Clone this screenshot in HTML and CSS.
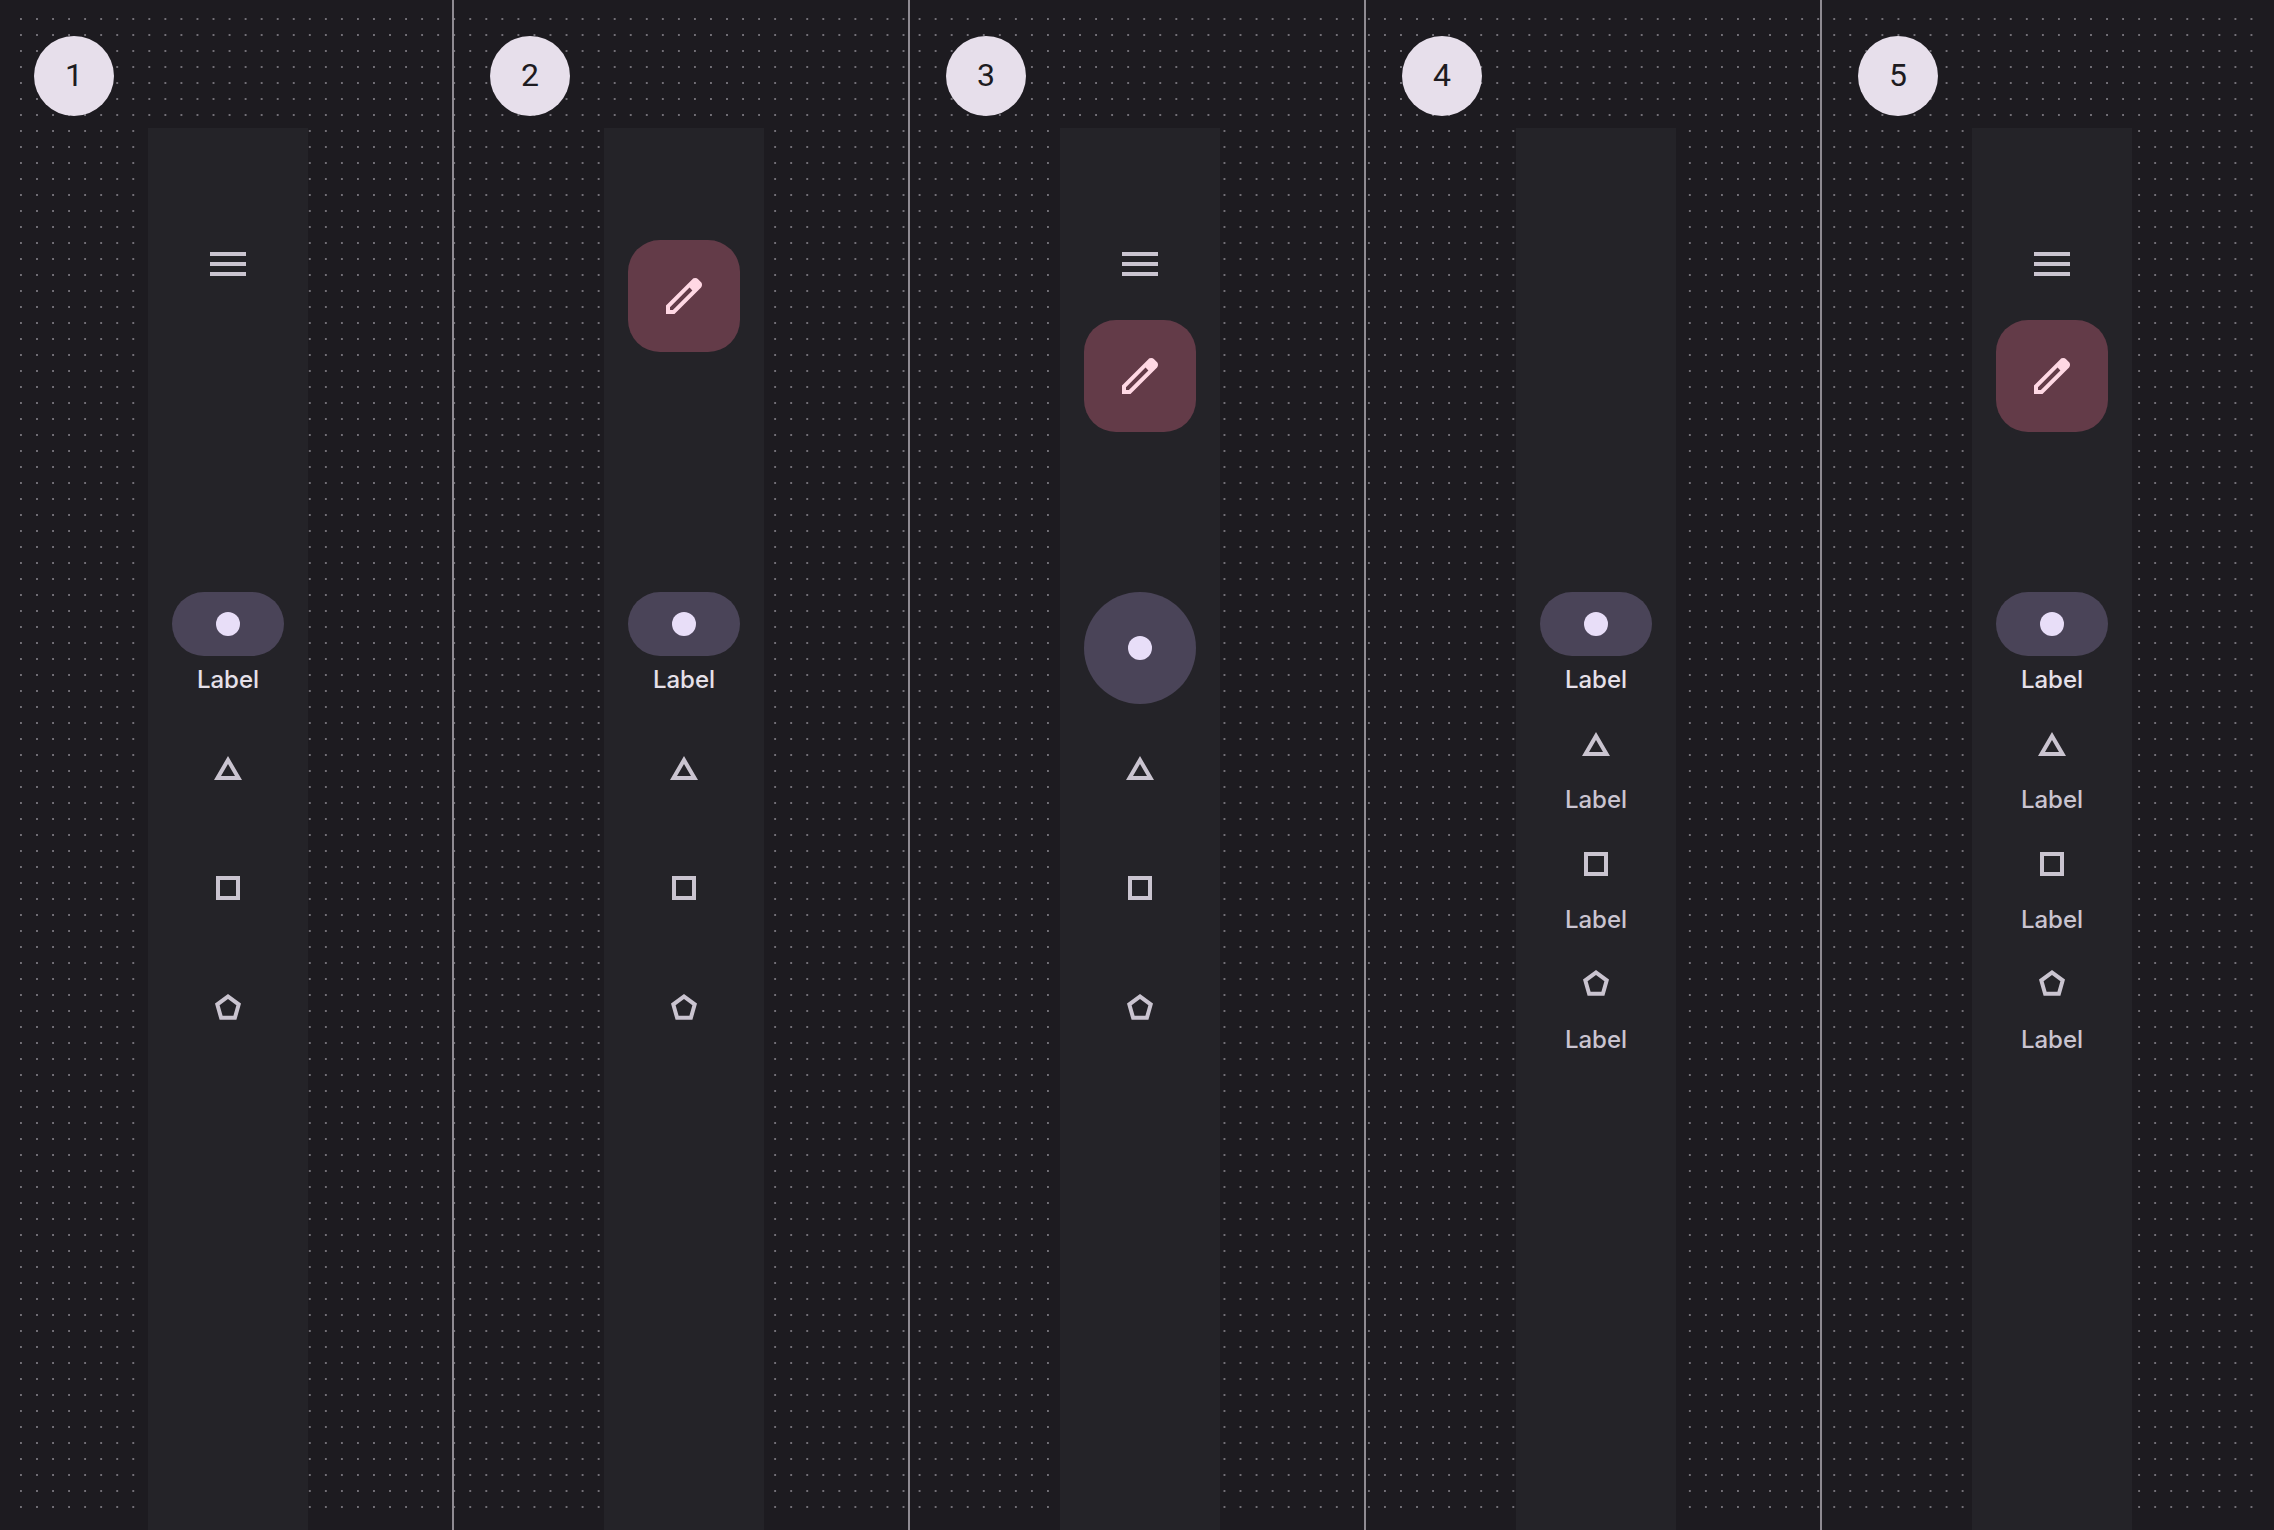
FILE: index.html
```html
<!DOCTYPE html>
<html lang="en">
<head>
<meta charset="utf-8">
<meta name="viewport" content="width=device-width, initial-scale=1">
<title>Navigation rail configurations</title>
<link rel="stylesheet" href="styles.css">
</head>
<body>
<svg class="sprite" aria-hidden="true">
  <symbol id="menu" viewBox="0 0 24 24"><path d="M3 18v-2h18v2ZM3 13v-2h18v2ZM3 8V6h18v2Z"/></symbol>
  <symbol id="edit" viewBox="0 0 24 24"><path fill-rule="evenodd" d="M5 19h1.425L16.2 9.225 14.775 7.8 5 17.575V19Zm-2 2v-4.25L16.2 3.575q.3-.275.663-.425t.762-.15q.4 0 .775.15t.65.45L20.425 5q.3.275.437.65T21 6.4q0 .4-.138.763t-.437.662L7.25 21H3Z"/></symbol>
  <symbol id="circle" viewBox="0 0 48 48"><circle cx="24" cy="24" r="12"/></symbol>
  <symbol id="triangle" viewBox="0 0 48 48"><path fill-rule="evenodd" d="M24 12 38 36H10ZM24 20 17 32H31Z"/></symbol>
  <symbol id="square" viewBox="0 0 48 48"><path fill-rule="evenodd" d="M12 12H36V36H12ZM16 16V32H32V16Z"/></symbol>
  <symbol id="pentagon" viewBox="0 0 48 48"><path fill-rule="evenodd" d="M24 10 37 19.6 32.4 35.8H15.6L11 19.6ZM24 15 32.4 21.2 29.4 31.8H18.6L15.6 21.2Z"/></symbol>
</svg>

<main class="board">
  <section class="panel">
    <div class="badge">1</div>
    <nav class="rail" aria-label="Rail 1">
      <div class="rail-top">
        <button class="menu" aria-label="Menu"><svg class="icon"><use href="#menu"/></svg></button>
      </div>
      <div class="items">
        <a class="item active" href="#"><span class="indicator"><svg class="icon"><use href="#circle"/></svg></span><span class="label">Label</span></a>
        <a class="item plain" href="#" aria-label="Triangle"><svg class="icon"><use href="#triangle"/></svg></a>
        <a class="item plain" href="#" aria-label="Square"><svg class="icon"><use href="#square"/></svg></a>
        <a class="item plain" href="#" aria-label="Pentagon"><svg class="icon"><use href="#pentagon"/></svg></a>
      </div>
    </nav>
  </section>

  <section class="panel">
    <div class="badge">2</div>
    <nav class="rail" aria-label="Rail 2">
      <div class="rail-top">
        <button class="fab" aria-label="Edit"><svg class="icon"><use href="#edit"/></svg></button>
      </div>
      <div class="items">
        <a class="item active" href="#"><span class="indicator"><svg class="icon"><use href="#circle"/></svg></span><span class="label">Label</span></a>
        <a class="item plain" href="#" aria-label="Triangle"><svg class="icon"><use href="#triangle"/></svg></a>
        <a class="item plain" href="#" aria-label="Square"><svg class="icon"><use href="#square"/></svg></a>
        <a class="item plain" href="#" aria-label="Pentagon"><svg class="icon"><use href="#pentagon"/></svg></a>
      </div>
    </nav>
  </section>

  <section class="panel">
    <div class="badge">3</div>
    <nav class="rail" aria-label="Rail 3">
      <div class="rail-top">
        <button class="menu" aria-label="Menu"><svg class="icon"><use href="#menu"/></svg></button>
        <button class="fab" aria-label="Edit"><svg class="icon"><use href="#edit"/></svg></button>
      </div>
      <div class="items">
        <a class="item active" href="#" aria-label="Circle"><span class="indicator round"><svg class="icon"><use href="#circle"/></svg></span></a>
        <a class="item plain" href="#" aria-label="Triangle"><svg class="icon"><use href="#triangle"/></svg></a>
        <a class="item plain" href="#" aria-label="Square"><svg class="icon"><use href="#square"/></svg></a>
        <a class="item plain" href="#" aria-label="Pentagon"><svg class="icon"><use href="#pentagon"/></svg></a>
      </div>
    </nav>
  </section>

  <section class="panel">
    <div class="badge">4</div>
    <nav class="rail" aria-label="Rail 4">
      <div class="rail-top"></div>
      <div class="items">
        <a class="item active" href="#"><span class="indicator"><svg class="icon"><use href="#circle"/></svg></span><span class="label">Label</span></a>
        <a class="item" href="#"><span class="indicator"><svg class="icon"><use href="#triangle"/></svg></span><span class="label">Label</span></a>
        <a class="item" href="#"><span class="indicator"><svg class="icon"><use href="#square"/></svg></span><span class="label">Label</span></a>
        <a class="item" href="#"><span class="indicator"><svg class="icon"><use href="#pentagon"/></svg></span><span class="label">Label</span></a>
      </div>
    </nav>
  </section>

  <section class="panel">
    <div class="badge">5</div>
    <nav class="rail" aria-label="Rail 5">
      <div class="rail-top">
        <button class="menu" aria-label="Menu"><svg class="icon"><use href="#menu"/></svg></button>
        <button class="fab" aria-label="Edit"><svg class="icon"><use href="#edit"/></svg></button>
      </div>
      <div class="items">
        <a class="item active" href="#"><span class="indicator"><svg class="icon"><use href="#circle"/></svg></span><span class="label">Label</span></a>
        <a class="item" href="#"><span class="indicator"><svg class="icon"><use href="#triangle"/></svg></span><span class="label">Label</span></a>
        <a class="item" href="#"><span class="indicator"><svg class="icon"><use href="#square"/></svg></span><span class="label">Label</span></a>
        <a class="item" href="#"><span class="indicator"><svg class="icon"><use href="#pentagon"/></svg></span><span class="label">Label</span></a>
      </div>
    </nav>
  </section>
</main>
</body>
</html>
```
FILE: styles.css
```css
:root {
  --surface: #1d1b20;
  --rail: #242328;
  --outline: #8f8b92;
  --grid-dot: #726f76;
  --on-surface: #e6e0e9;
  --on-surface-variant: #cac4d0;
  --badge: #e7dfeb;
  --secondary: #4a4458;
  --on-secondary: #e8def8;
  --tertiary: #633b48;
  --on-tertiary: #ffd8e4;
}

* {
  box-sizing: border-box;
}

body {
  position: relative;
  margin: 0;
  overflow-x: hidden;
  background: var(--surface);
  color: var(--on-surface-variant);
  font-family: Inter, "Liberation Sans", sans-serif;
}

/* Dotted canvas behind all of the panels */
body::before {
  content: "";
  position: absolute;
  inset: 18px 6px 8px 20px;
  z-index: -1;
  background-image: conic-gradient(from 270deg at 2px 2px, var(--grid-dot) 90deg, transparent 0);
  background-size: 16px 16px;
  background-repeat: space repeat;
  clip-path: inset(0 8px 0 0);
}

.sprite {
  display: none;
}

.board {
  display: grid;
  grid-template-columns: repeat(5, 1fr);
  min-height: 100vh;
  margin: 0 -4px 0 -2px;
}

.panel {
  display: flex;
  flex-direction: column;
  gap: 12px;
  padding: 36px 0 0 6px;
  border-right: 2px solid var(--outline);
}

.badge {
  display: flex;
  align-items: center;
  justify-content: center;
  width: 80px;
  height: 80px;
  margin-left: 30px;
  padding-bottom: 2px;
  border-radius: 50%;
  background: var(--badge);
  color: var(--surface);
  font: 400 32px/40px Roboto, "Liberation Sans", sans-serif;
}

.rail {
  display: flex;
  flex: 1;
  flex-direction: column;
  align-self: center;
  width: 160px;
  padding-top: 112px;
  background: var(--rail);
}

.rail-top {
  display: flex;
  flex-direction: column;
  align-items: center;
  gap: 32px;
  height: 352px;
}

.icon {
  display: block;
  width: 48px;
  height: 48px;
  fill: currentColor;
}

.menu,
.fab {
  padding: 0;
  border: 0;
  background: none;
  color: inherit;
  cursor: pointer;
}

.fab {
  display: flex;
  align-items: center;
  justify-content: center;
  width: 112px;
  height: 112px;
  border-radius: 32px;
  background: var(--tertiary);
  color: var(--on-tertiary);
}

.items {
  display: flex;
  flex-direction: column;
  align-items: center;
  gap: 8px;
}

.item {
  display: flex;
  flex-direction: column;
  align-items: center;
  gap: 8px;
  width: 112px;
  height: 112px;
  color: inherit;
  text-decoration: none;
}

.plain {
  justify-content: center;
}

.indicator {
  display: flex;
  align-items: center;
  justify-content: center;
  width: 112px;
  height: 64px;
  border-radius: 56px;
}

.round {
  height: 112px;
}

.active .indicator {
  background: var(--secondary);
  color: var(--on-secondary);
}

.label {
  font-size: 24px;
  font-weight: 500;
  line-height: 32px;
}

.active .label {
  color: var(--on-surface);
}
```
